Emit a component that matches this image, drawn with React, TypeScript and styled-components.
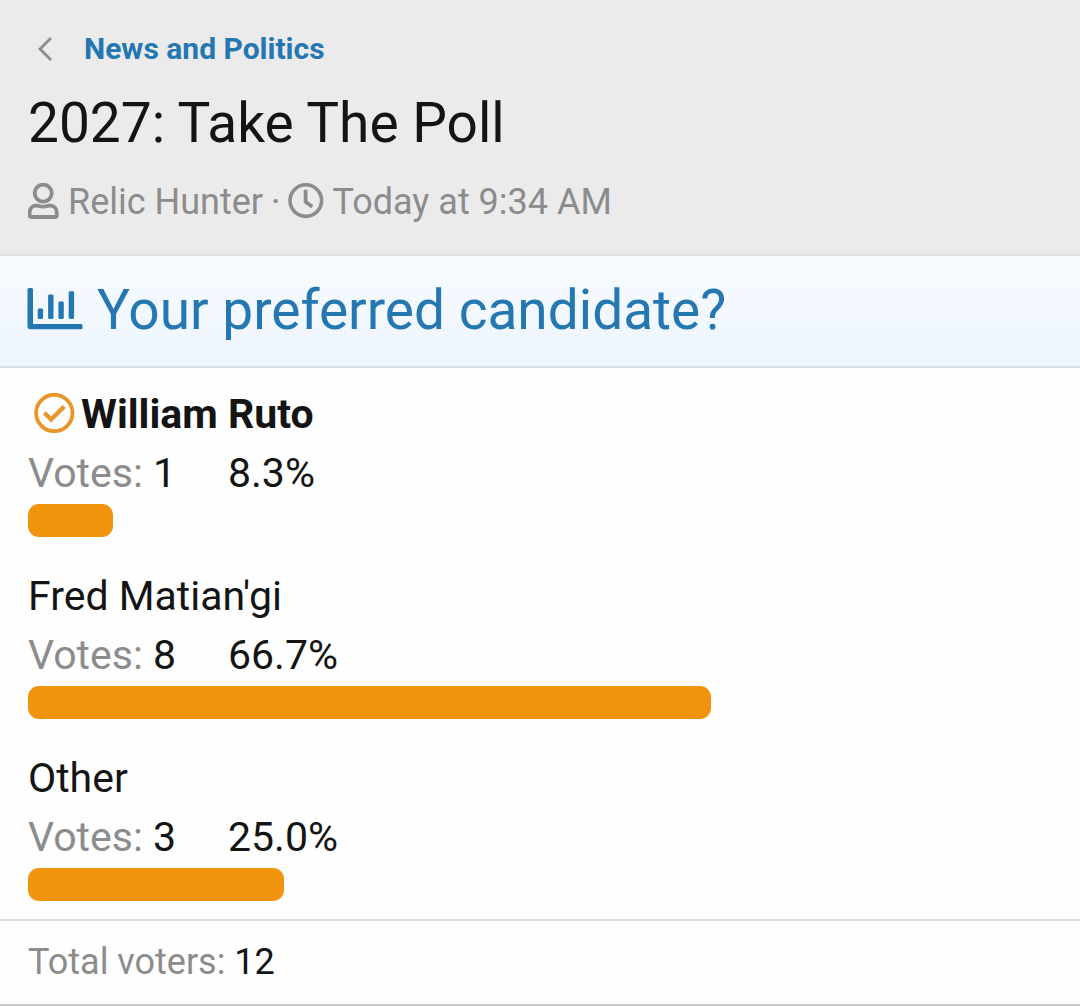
import React from 'react';
import styled, { createGlobalStyle } from 'styled-components';

const GlobalStyle = createGlobalStyle`
  *, *::before, *::after { box-sizing: border-box; }
  body {
    margin: 0;
    background: #fefefe;
    color: #141414;
    font-family: Roboto, 'Liberation Sans', sans-serif;
  }
`;

const Header = styled.header`
  padding: 28px 28px 27px;
  background: #ebebeb;
  border-bottom: 2px solid #dfdfdf;
`;

const Breadcrumb = styled.nav`
  display: flex;
  align-items: center;
  gap: 32px;
  margin-bottom: 14px;
  padding-left: 10px;
  font-size: 30px;
  line-height: 42px;
`;

const CrumbLink = styled.a`
  color: #2577b1;
  font-weight: 700;
  text-decoration: none;
`;

const Title = styled.h1`
  margin: 0 0 15px;
  font-size: 55px;
  font-weight: 400;
  line-height: 78px;
`;

const Meta = styled.div`
  display: flex;
  flex-wrap: wrap;
  align-items: center;
  gap: 8px;
  color: #8c8c8c;
  font-size: 36px;
  line-height: 50px;
`;

const MetaItem = styled.span`
  display: flex;
  align-items: center;
  gap: 8px;
`;

const Icon = styled.svg`
  display: block;
  flex: none;
  fill: none;
  stroke: currentColor;
`;

const CrumbIcon = styled(Icon)`
  color: #8c8c8c;
`;

const PollTitle = styled.h2`
  display: flex;
  align-items: center;
  gap: 14px;
  margin: 0;
  padding: 15px 28px 17px;
  background: linear-gradient(#f7fbff, #edf5fd);
  border-bottom: 2px solid #d9dfe4;
  color: #2577b1;
  font-size: 55px;
  font-weight: 400;
  line-height: 78px;
`;

const Results = styled.ul`
  display: flex;
  flex-direction: column;
  gap: 30px;
  margin: 0;
  padding: 17px 28px 18px;
  list-style: none;
  font-size: 41px;
  line-height: 59px;
`;

const Name = styled.h3<{ $voted?: boolean }>`
  display: flex;
  align-items: center;
  margin: 0;
  font-size: inherit;
  font-weight: ${({ $voted }) => ($voted ? 700 : 400)};
`;

const VotedIcon = styled(Icon)`
  margin: 0 6px;
  color: #e8962a;
`;

const Figures = styled.div`
  display: flex;
`;

const Votes = styled.span`
  min-width: 200px;
`;

const Muted = styled.span`
  color: #8c8c8c;
`;

const Bar = styled.div`
  height: 33px;
  margin-top: 1px;
  border-radius: 11px;
  background: #f2930d;
`;

const Footer = styled.footer`
  padding: 16px 28px 17px;
  border-top: 2px solid #dfdfdf;
  border-bottom: 2px solid #c9c9c9;
  font-size: 36px;
  line-height: 50px;
`;

const candidates = [
  { name: 'William Ruto', votes: 1, share: 8.3, voted: true },
  { name: "Fred Matian'gi", votes: 8, share: 66.7 },
  { name: 'Other', votes: 3, share: 25 },
];

const total = candidates.reduce((sum, c) => sum + c.votes, 0);

export default function App() {
  return (
    <main>
      <GlobalStyle />
      <Header>
        <Breadcrumb aria-label="Breadcrumb">
          <CrumbIcon width="14" height="24" viewBox="0 0 14 24" strokeWidth="2.8" aria-hidden="true">
            <path d="M13 1 L2 12 L13 23" />
          </CrumbIcon>
          <CrumbLink href="#news">News and Politics</CrumbLink>
        </Breadcrumb>
        <Title>2027: Take The Poll</Title>
        <Meta>
          <MetaItem>
            <Icon width="32" height="38" viewBox="0 0 32 38" strokeWidth="3.8" aria-hidden="true">
              <circle cx="15.2" cy="10.1" r="8.5" />
              <path d="M8.7 22.5C4.2 22.5 1.6 25.7 1.6 29.7V32.3Q1.6 34 3.3 34H27.1Q28.8 34 28.8 32.3V29.7C28.8 25.7 26.2 22.5 21.7 22.5C19.7 22.5 18.7 23.7 15.2 23.7C11.7 23.7 10.7 22.5 8.7 22.5Z" />
            </Icon>
            <span>Relic Hunter</span>
          </MetaItem>
          <span>·</span>
          <MetaItem>
            <Icon width="36" height="38" viewBox="0 0 36 38" strokeWidth="3.6" aria-hidden="true">
              <circle cx="17.8" cy="17.6" r="15.8" />
              <path d="M17.6 8.6V18.8L22.7 22.6" strokeWidth="3.8" strokeLinejoin="round" strokeLinecap="square" />
            </Icon>
            <time>Today at 9:34 AM</time>
          </MetaItem>
        </Meta>
      </Header>
      <section>
        <PollTitle>
          <Icon width="55" height="44" viewBox="0.5 0 55 44" aria-hidden="true" overflow="visible">
            <g fill="currentColor" stroke="none">
              <path d="M0 1.5Q0 0 1.5 0H4Q5.5 0 5.5 1.5V36H53.5Q55 36 55 37.5V39.7Q55 41.2 53.5 41.2H3Q0 41.2 0 38.2Z" />
              <rect x="10.2" y="20.5" width="5.4" height="10.5" rx="1.4" />
              <rect x="20.6" y="6.5" width="5.4" height="24.5" rx="1.4" />
              <rect x="30.9" y="13.5" width="5.4" height="17.5" rx="1.4" />
              <rect x="41.2" y="3.2" width="5.4" height="27.8" rx="1.4" />
            </g>
          </Icon>
          <span>Your preferred candidate?</span>
        </PollTitle>
        <Results>
          {candidates.map((c) => (
            <li key={c.name}>
              <Name $voted={c.voted}>
                {c.voted && (
                  <VotedIcon width="41" height="43" viewBox="0 0 41 43" strokeWidth="3.8" role="img" aria-label="Your vote">
                    <circle cx="20.3" cy="20" r="18.2" />
                    <path d="M10.4 19.8L17.1 26.5L30.2 13.5" strokeWidth="4.4" />
                  </VotedIcon>
                )}
                {c.name}
              </Name>
              <Figures>
                <Votes>
                  <Muted>Votes:</Muted> {c.votes}
                </Votes>
                <span>{c.share.toFixed(1)}%</span>
              </Figures>
              <Bar style={{ width: `${c.share}%` }} />
            </li>
          ))}
        </Results>
        <Footer>
          <Muted>Total voters:</Muted> {total}
        </Footer>
      </section>
    </main>
  );
}
